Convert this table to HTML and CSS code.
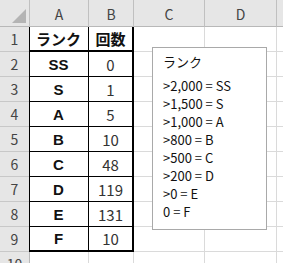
FILE: index.html
```html
<!DOCTYPE html>
<html lang="ja">
<head>
    <meta charset="UTF-8">
    <title>ランク表</title>
    <link rel="stylesheet" href="styles.css">
</head>
<body>
    <div class="sheet">
        <!-- column headers -->
        <div class="hd corner"><span class="tri"></span></div>
        <div class="hd">A</div>
        <div class="hd">B</div>
        <div class="hd">C</div>
        <div class="hd">D</div>
        <div class="hd last"></div>

        <div class="rh">1</div>
        <div class="c t a top-row">ランク</div>
        <div class="c t b top-row">回数</div>
        <div class="c"></div><div class="c"></div><div class="c last"></div>

        <div class="rh">2</div>
        <div class="c t a">SS</div><div class="c t b num">0</div>
        <div class="c"></div><div class="c"></div><div class="c last"></div>

        <div class="rh">3</div>
        <div class="c t a">S</div><div class="c t b num">1</div>
        <div class="c"></div><div class="c"></div><div class="c last"></div>

        <div class="rh">4</div>
        <div class="c t a">A</div><div class="c t b num">5</div>
        <div class="c"></div><div class="c"></div><div class="c last"></div>

        <div class="rh">5</div>
        <div class="c t a">B</div><div class="c t b num">10</div>
        <div class="c"></div><div class="c"></div><div class="c last"></div>

        <div class="rh">6</div>
        <div class="c t a">C</div><div class="c t b num">48</div>
        <div class="c"></div><div class="c"></div><div class="c last"></div>

        <div class="rh">7</div>
        <div class="c t a">D</div><div class="c t b num">119</div>
        <div class="c"></div><div class="c"></div><div class="c last"></div>

        <div class="rh">8</div>
        <div class="c t a">E</div><div class="c t b num">131</div>
        <div class="c"></div><div class="c"></div><div class="c last"></div>

        <div class="rh">9</div>
        <div class="c t a end-row">F</div><div class="c t b num end-row">10</div>
        <div class="c"></div><div class="c"></div><div class="c last"></div>

        <div class="rh">10</div>
        <div class="c"></div><div class="c"></div>
        <div class="c"></div><div class="c"></div><div class="c last"></div>

        <!-- text box floating over C/D -->
        <div class="note">
            <div class="note-title">ランク</div>
            <div>&gt;2,000 = SS</div>
            <div>&gt;1,500 = S</div>
            <div>&gt;1,000 = A</div>
            <div>&gt;800 = B</div>
            <div>&gt;500 = C</div>
            <div>&gt;200 = D</div>
            <div>&gt;0 = E</div>
            <div>0 = F</div>
        </div>
    </div>
</body>
</html>
```

FILE: styles.css
```css
body {
    margin: 0;
    background: #fff;
    font-family: "Liberation Sans", "Noto Sans CJK JP", sans-serif;
    overflow: hidden;
}
.sheet {
    position: relative;
    display: grid;
    grid-template-columns: 30px 59px 45px 71px 72px 1fr;
    grid-template-rows: 27px repeat(10, 25px);
    width: 283px;
    height: 263px;
    overflow: hidden;
}
.sheet > div {
    box-sizing: border-box;
}
.hd {
    background: #e6e6e6;
    border-right: 1px solid #c0c0c0;
    border-bottom: 1px solid #b8b8b8;
    color: #444;
    font-family: "Noto Sans CJK JP", sans-serif;
    font-size: 14px;
    display: flex;
    align-items: center;
    justify-content: center;
    padding-top: 1px;
}
.corner {
    position: relative;
}
.tri {
    position: absolute;
    right: 3px;
    bottom: 3px;
    width: 0;
    height: 0;
    border-left: 14px solid transparent;
    border-bottom: 14px solid #b4b4b4;
}
.rh {
    background: #e6e6e6;
    border-right: 1px solid #b8b8b8;
    border-bottom: 1px solid #c8c8c8;
    color: #444;
    font-family: "Noto Sans CJK JP", sans-serif;
    font-size: 14px;
    display: flex;
    align-items: center;
    justify-content: center;
}
.c {
    border-right: 1px solid #dadada;
    border-bottom: 1px solid #dadada;
    display: flex;
    align-items: center;
    justify-content: center;
    font-size: 15px;
    color: #111;
}
.last {
    border-right: none;
}
.t {
    border-color: #000;
}
.a {
    font-weight: bold;
    box-shadow: inset 1px 0 0 #000;
    margin-left: -1px;
}
.b {
    border-right-width: 2px;
}
.num {
    font-family: "Noto Sans CJK JP", sans-serif;
    font-weight: normal;
    font-size: 15px;
    color: #333;
}
.top-row {
    font-family: "Noto Sans CJK JP", sans-serif;
    font-weight: bold;
    border-bottom-width: 2px;
}
.end-row {
    border-bottom-width: 2px;
}
.note {
    position: absolute;
    left: 152px;
    top: 47px;
    width: 115px;
    height: 183px;
    background: #fff;
    border: 1px solid #a9a9a9;
    padding: 5px 0 0 10px;
    font-family: "Noto Sans CJK JP", sans-serif;
    font-size: 13px;
    line-height: 18px;
    color: #111;
}
.note-title {
    margin-bottom: 6px;
}
```
